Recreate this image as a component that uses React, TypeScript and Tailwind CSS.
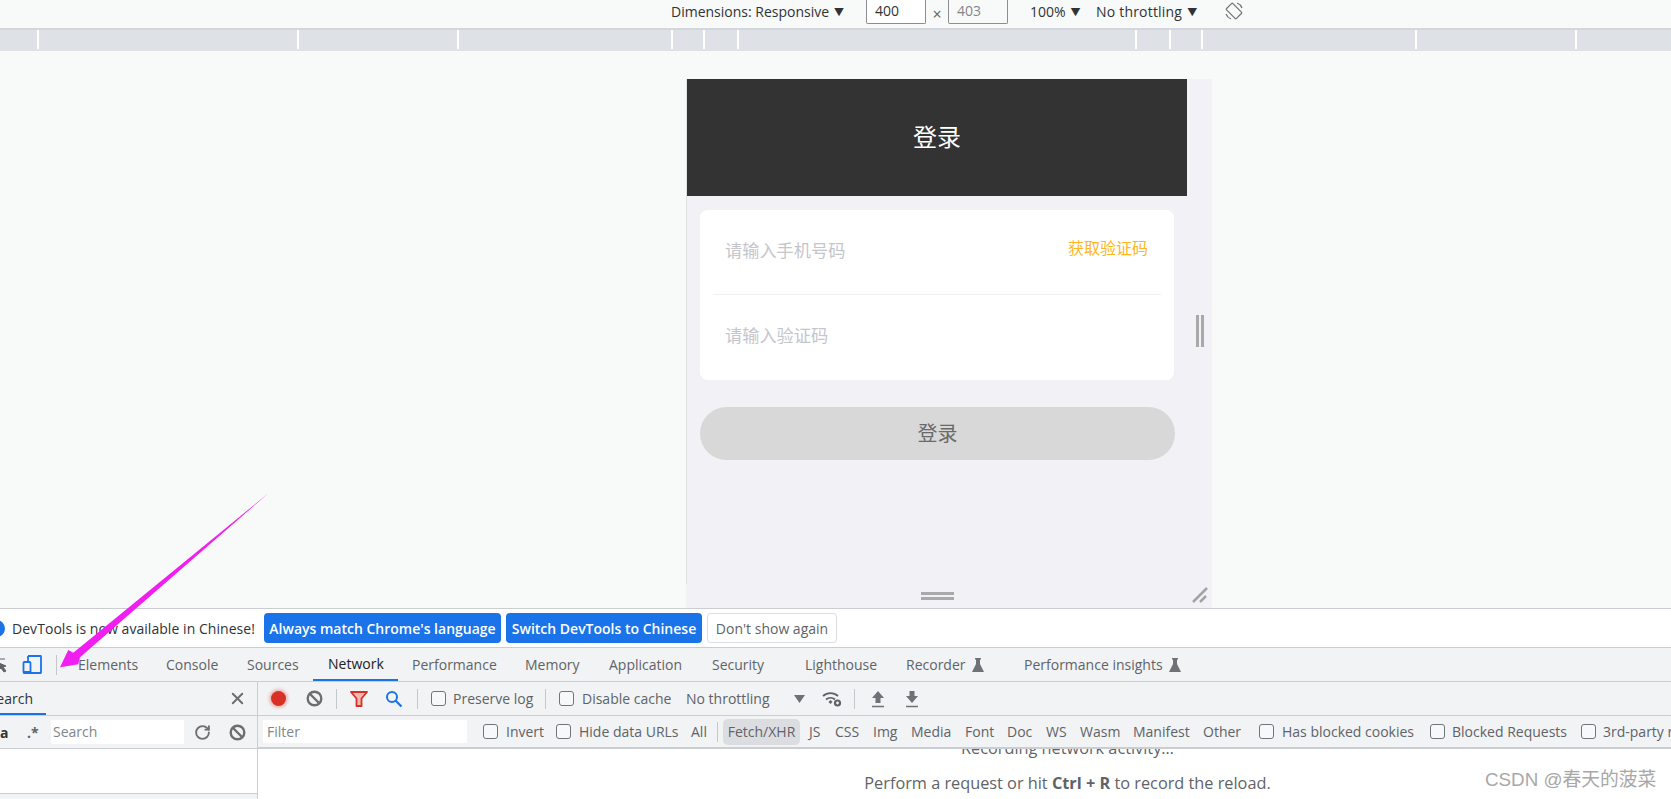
import { RotateCw, X } from "lucide-react";

function Flask() {
  return (
    <svg width="12" height="14" viewBox="0 0 12 14" className="shrink-0">
      <path d="M3 0h6v1.500H8V6l4 8H0l4-8V1.500H3z" fill="#6e7175" />
    </svg>
  );
}

function Clear() {
  return (
    <svg width="17" height="17" viewBox="0 0 17 17" className="shrink-0 block">
      <circle cx="8.500" cy="8.500" r="6.800" fill="none" stroke="#6e6e6e" strokeWidth="2.400" />
      <path d="M4 4l9 9" stroke="#6e6e6e" strokeWidth="2.400" />
    </svg>
  );
}

function Box() {
  return <span className="block w-[15px] h-[15px] shrink-0 border border-[#70757a] rounded-[3px] bg-[#f7f8f9]" />;
}

function Sep({ className }: { className: string }) {
  return <span className={`block w-px h-[20px] bg-[#c4c7cb] shrink-0 ${className}`} />;
}

function Tri() {
  return <span className="text-[10px] ml-[5px] relative top-[-1px] text-[#303336]">▼</span>;
}

export default function App() {
  return (
    <div className="relative w-[1671px] h-[799px] overflow-hidden bg-[#f8faf9] font-['Open_Sans','Noto_Sans_CJK_SC',sans-serif] text-[14px] text-[#5f6368] flex flex-col">
      {/* device toolbar */}
      <div className="h-[28px] shrink-0 flex items-start pl-[671px] text-[#303336] whitespace-nowrap [&>*]:shrink-0">
        <span className="w-[195px] leading-[23px]">Dimensions: Responsive<Tri /></span>
        <span className="w-[60px] h-[24px] bg-white border border-t-0 border-[#8a8d91] rounded-b-[2px] pl-[8px] leading-[22px]">400</span>
        <span className="w-[22px] text-center leading-[29px] text-[16px] text-[#5f6368]">×</span>
        <span className="w-[60px] h-[24px] bg-[#f8faf9] border border-t-0 border-[#8a8d91] rounded-b-[2px] pl-[8px] leading-[22px] text-[#80868b]">403</span>
        <span className="ml-[22px] w-[66px] leading-[23px]">100%<Tri /></span>
        <span className="w-[129px] leading-[23px] tracking-[0.2px]">No throttling<Tri /></span>
        <svg width="20" height="20" viewBox="0 0 20 20" className="mt-[1px] ml-[-1px]">
          <g transform="rotate(-45 10 10)" fill="none" stroke="#6e7175" strokeWidth="1.200">
            <rect x="5.500" y="3" width="9" height="14" rx="1" />
            <path d="M2.200 6.500A8.500 8.500 0 0 0 2.200 13.500M17.800 6.500A8.500 8.500 0 0 1 17.800 13.500" />
          </g>
        </svg>
      </div>
      <div className="h-[2px] shrink-0 bg-[#d3d6da]" />
      {/* ruler */}
      <div className="h-[21px] shrink-0 bg-[#dee1e6] flex items-start">
        <span className="block w-[39px] h-[19px] border-r-2 border-white" />
        <span className="block w-[260px] h-[19px] border-r-2 border-white" />
        <span className="block w-[160px] h-[19px] border-r-2 border-white" />
        <span className="block w-[214px] h-[19px] border-r-2 border-white" />
        <span className="block w-[32px] h-[19px] border-r-2 border-white" />
        <span className="block w-[34px] h-[19px] border-r-2 border-white" />
        <span className="block w-[398px] h-[19px] border-r-2 border-white" />
        <span className="block w-[34px] h-[19px] border-r-2 border-white" />
        <span className="block w-[32px] h-[19px] border-r-2 border-white" />
        <span className="block w-[214px] h-[19px] border-r-2 border-white" />
        <span className="block w-[160px] h-[19px] border-r-2 border-white" />
      </div>
      {/* emulated page */}
      <div className="h-[557px] shrink-0 pt-[28px] pl-[686px]">
        <div className="w-[526px] h-[529px] bg-[#f2f2f6] flex flex-col">
          <div className="h-[505px] flex">
            <div className="w-[501px] border-l border-[#dfe1e1]">
              <div className="h-[117px] w-[500px] bg-[#333333] flex items-center justify-center text-white text-[24px]">
                <span className="mb-[2px]">登录</span>
              </div>
              <div className="ml-[13px] mt-[14px] w-[474px] h-[170px] bg-white rounded-lg px-[13px]">
                <div className="h-[85px] border-b border-[#f0f0f0] pl-[12px] pr-[13px] flex items-center justify-between">
                  <span className="text-[17.200px] text-[#c4c6cc] mb-[2px]">请输入手机号码</span>
                  <span className="text-[16px] text-[#ffb61e] mb-[9px]">获取验证码</span>
                </div>
                <div className="h-[85px] pl-[12px] flex items-center">
                  <span className="text-[17.200px] text-[#c4c6cc] mb-[3px]">请输入验证码</span>
                </div>
              </div>
              <div className="ml-[13px] mt-[27px] w-[475px] h-[53px] rounded-full bg-[#d8d8d8] flex items-center justify-center text-[20px] text-[#6a6a6a]">
                <span className="mt-[1px]">登录</span>
              </div>
            </div>
            <div className="flex-1 pt-[236px] pl-[9px]">
              <div className="w-[8px] h-[32px] flex justify-between">
                <span className="block w-[3px] h-full bg-[#a9a9a9]" />
                <span className="block w-[3px] h-full bg-[#a9a9a9]" />
              </div>
            </div>
          </div>
          <div className="h-[24px] flex items-start">
            <div className="ml-[235px] mt-[8px] w-[33px] h-[8px] flex flex-col justify-between">
              <span className="block h-[3px] bg-[#a9a9a9]" />
              <span className="block h-[3px] bg-[#a9a9a9]" />
            </div>
            <svg width="16" height="16" viewBox="0 0 16 16" className="ml-[238px] mt-[3px]">
              <path d="M1 15L15 1M8 15l6-6" stroke="#a3a3a3" strokeWidth="2.500" />
            </svg>
          </div>
        </div>
      </div>
      {/* devtools */}
      <div className="h-[214px] shrink-0 flex flex-col border-t border-[#cacdd1] whitespace-nowrap">
        {/* infobar */}
        <div className="h-[38px] bg-white flex items-center border-b border-[#cacdd1] shrink-0 box-content [&>*]:shrink-0">
          <span className="block w-[17px] h-[17px] rounded-full bg-[#1a73e8] ml-[-12px]" />
          <span className="ml-[7px] w-[252px] text-[#303336] mt-[1px] tracking-[0.05px]">DevTools is now available in Chinese!</span>
          <span className="w-[237px] h-[30px] bg-[#1a73e8] rounded-[4px] text-white font-semibold flex items-center justify-center">Always match Chrome's language</span>
          <span className="ml-[5px] w-[196px] h-[30px] bg-[#1a73e8] rounded-[4px] text-white font-semibold flex items-center justify-center">Switch DevTools to Chinese</span>
          <span className="ml-[5px] w-[130px] h-[30px] bg-white border border-[#dadce0] rounded-[4px] font-medium flex items-center justify-center">Don't show again</span>
        </div>
        {/* tabs */}
        <div className="h-[33px] bg-[#f1f3f4] flex items-center border-b border-[#cacdd1] shrink-0 box-content [&>*]:shrink-0">
          <svg width="7" height="18" viewBox="0 0 7 18">
            <path d="M0 3h5M-1 7l7 3-3 1 3 4-2 1-3-4-2 2z" fill="#5f6368" stroke="#5f6368" strokeWidth="1" />
          </svg>
          <svg width="20" height="19" viewBox="0 0 20 19" className="ml-[15px]">
            <path d="M6 1h12.500a.5.5 0 0 1 .5.500v16a.5.5 0 0 1-.5.500H8" fill="none" stroke="#1a73e8" strokeWidth="1.800" />
            <path d="M6 1v6" stroke="#1a73e8" strokeWidth="1.800" />
            <rect x="1.500" y="7" width="7" height="11" rx="1" fill="none" stroke="#1a73e8" strokeWidth="1.800" />
            <rect x="1" y="16" width="8" height="2.500" fill="#1a73e8" />
          </svg>
          <Sep className="ml-[14px]" />
          <span className="ml-[21px] w-[88px]">Elements</span>
          <span className="w-[81px]">Console</span>
          <span className="w-[66px]">Sources</span>
          <span className="w-[85px] h-full flex items-center pl-[15px] border-b-2 border-[#1a73e8] text-[#202124]">Network</span>
          <span className="ml-[14px] w-[113px]">Performance</span>
          <span className="w-[84px]">Memory</span>
          <span className="w-[103px]">Application</span>
          <span className="w-[93px]">Security</span>
          <span className="w-[101px]">Lighthouse</span>
          <span className="w-[118px] flex items-center gap-[6px]">Recorder <Flask /></span>
          <span className="flex items-center gap-[6px]">Performance insights <Flask /></span>
        </div>
        {/* panels */}
        <div className="flex-1 min-h-0 flex">
          {/* left drawer */}
          <div className="w-[258px] shrink-0 border-r border-[#cacdd1] flex flex-col">
            <div className="h-[34px] shrink-0 bg-[#f1f3f4] border-b border-[#cacdd1] flex items-center [&>*]:shrink-0">
              <span className="w-[46px] h-full flex items-center justify-end pr-[13px] pt-[1px] border-b-2 border-[#1a73e8] text-[#303336]">Search</span>
              <X size={19} strokeWidth={2.400} color="#6e6e6e" className="ml-[182px]" />
            </div>
            <div className="h-[33px] shrink-0 bg-[#f1f3f4] border-b border-[#cacdd1] flex items-center [&>*]:shrink-0">
              <span className="w-[27px] font-bold text-[#303336]">a</span>
              <span className="w-[24px] font-bold">.*</span>
              <span className="w-[133px] h-[24px] bg-white pl-[2px] leading-[24px] text-[#80868b]">Search</span>
              <RotateCw size={17} strokeWidth={2.600} color="#6e6e6e" className="ml-[10px]" />
              <span className="ml-[18px]"><Clear /></span>
            </div>
            <div className="h-[45px] shrink-0 bg-white border-b border-[#cacdd1]" />
            <div className="flex-1 bg-[#f1f3f4]" />
          </div>
          {/* network */}
          <div className="flex-1 min-w-0 flex flex-col">
            <div className="h-[34px] shrink-0 bg-[#f1f3f4] border-b border-[#cacdd1] flex items-center [&>*]:shrink-0">
              <span className="ml-[13px] block w-[15px] h-[15px] rounded-full bg-[#d93025] shadow-[0_0_3px_2px_rgba(217,48,37,0.3)]" />
              <span className="ml-[20px]"><Clear /></span>
              <Sep className="ml-[13px]" />
              <svg width="18" height="16" viewBox="0 0 18 16" className="ml-[13px]">
                <path d="M1 1h16l-5.500 6.500V15h-5V7.500z" fill="#f4b8b2" stroke="#d93025" strokeWidth="1.800" strokeLinejoin="round" />
              </svg>
              <svg width="18" height="18" viewBox="0 0 18 18" className="ml-[17px]">
                <circle cx="7" cy="7" r="5" fill="none" stroke="#1a73e8" strokeWidth="2" />
                <path d="M10.500 10.500L16.500 16.500" stroke="#1a73e8" strokeWidth="2.200" />
              </svg>
              <Sep className="ml-[14px]" />
              <span className="ml-[13px]"><Box /></span>
              <span className="ml-[7px] w-[92px]">Preserve log</span>
              <Sep className="" />
              <span className="ml-[13px]"><Box /></span>
              <span className="ml-[8px] w-[104px]">Disable cache</span>
              <span className="w-[107px]">No throttling</span>
              <svg width="13" height="10" viewBox="0 0 13 10">
                <path d="M1 1h11L6.500 9z" fill="#6e7175" />
              </svg>
              <svg width="21" height="18" viewBox="0 0 21 18" className="ml-[16px]">
                <path d="M1 6a11 11 0 0 1 15 0M4 9.500a7 7 0 0 1 9 0" fill="none" stroke="#5f6368" strokeWidth="1.800" />
                <path d="M6.500 12l2-2 2 2-2 2z" fill="#5f6368" />
                <circle cx="15.500" cy="13" r="2.500" fill="none" stroke="#5f6368" strokeWidth="2.200" />
              </svg>
              <Sep className="ml-[11px]" />
              <svg width="14" height="18" viewBox="0 0 14 18" className="ml-[16px]">
                <path d="M7 1l6 7H9.500v5h-5V8H1z" fill="#6e7175" />
                <path d="M1 16.500h12" stroke="#6e7175" strokeWidth="1.500" />
              </svg>
              <svg width="14" height="18" viewBox="0 0 14 18" className="ml-[20px]">
                <path d="M7 13l6-7H9.500V1h-5v5H1z" fill="#6e7175" />
                <path d="M1 16.500h12" stroke="#6e7175" strokeWidth="1.500" />
              </svg>
            </div>
            <div className="h-[33px] shrink-0 bg-[#f1f3f4] border-b-2 border-[#cacdd1] flex items-center [&>*]:shrink-0">
              <span className="ml-[5px] w-[204px] h-[23px] bg-white pl-[4px] leading-[23px] text-[#80868b]">Filter</span>
              <span className="ml-[16px]"><Box /></span>
              <span className="ml-[8px] w-[50px]">Invert</span>
              <Box />
              <span className="ml-[8px] w-[112px]">Hide data URLs</span>
              <span className="w-[26px]">All</span>
              <Sep className="" />
              <span className="ml-[5px] w-[77px] h-[26px] rounded-[5px] bg-[#dcdde0] flex items-center justify-center">Fetch/XHR</span>
              <span className="ml-[9px] w-[26px]">JS</span>
              <span className="w-[38px]">CSS</span>
              <span className="w-[38px]">Img</span>
              <span className="w-[54px]">Media</span>
              <span className="w-[42px]">Font</span>
              <span className="w-[39px]">Doc</span>
              <span className="w-[34px]">WS</span>
              <span className="w-[53px]">Wasm</span>
              <span className="w-[70px]">Manifest</span>
              <span className="w-[56px]">Other</span>
              <Box />
              <span className="ml-[8px] w-[148px]">Has blocked cookies</span>
              <Box />
              <span className="ml-[7px] w-[129px]">Blocked Requests</span>
              <Box />
              <span className="ml-[7px]">3rd-party requests</span>
            </div>
            <div className="flex-1 min-h-0 bg-white overflow-hidden flex flex-col items-center pl-[206px] text-[16.300px] leading-[20px]">
              <span className="mt-[-11px]">Recording network activity…</span>
              <span className="mt-[15px]">Perform a request or hit <b className="font-bold">Ctrl + R</b> to record the reload.</span>
            </div>
          </div>
        </div>
      </div>
      {/* annotation arrow */}
      <svg width="1671" height="799" viewBox="0 0 1671 799" className="absolute inset-0 pointer-events-none">
        <path d="M268.700 493L80 657.300L78.300 664.300L60 667.300L68.300 650L73.300 652.700Z" fill="#f01ef0" />
      </svg>
      {/* watermark */}
      <span className="absolute left-[1485px] top-[769px] font-['Liberation_Sans','Noto_Sans_CJK_SC',sans-serif] text-[18.800px] leading-[22px] text-[#a8a8a8] whitespace-nowrap">CSDN @春天的菠菜</span>
    </div>
  );
}
